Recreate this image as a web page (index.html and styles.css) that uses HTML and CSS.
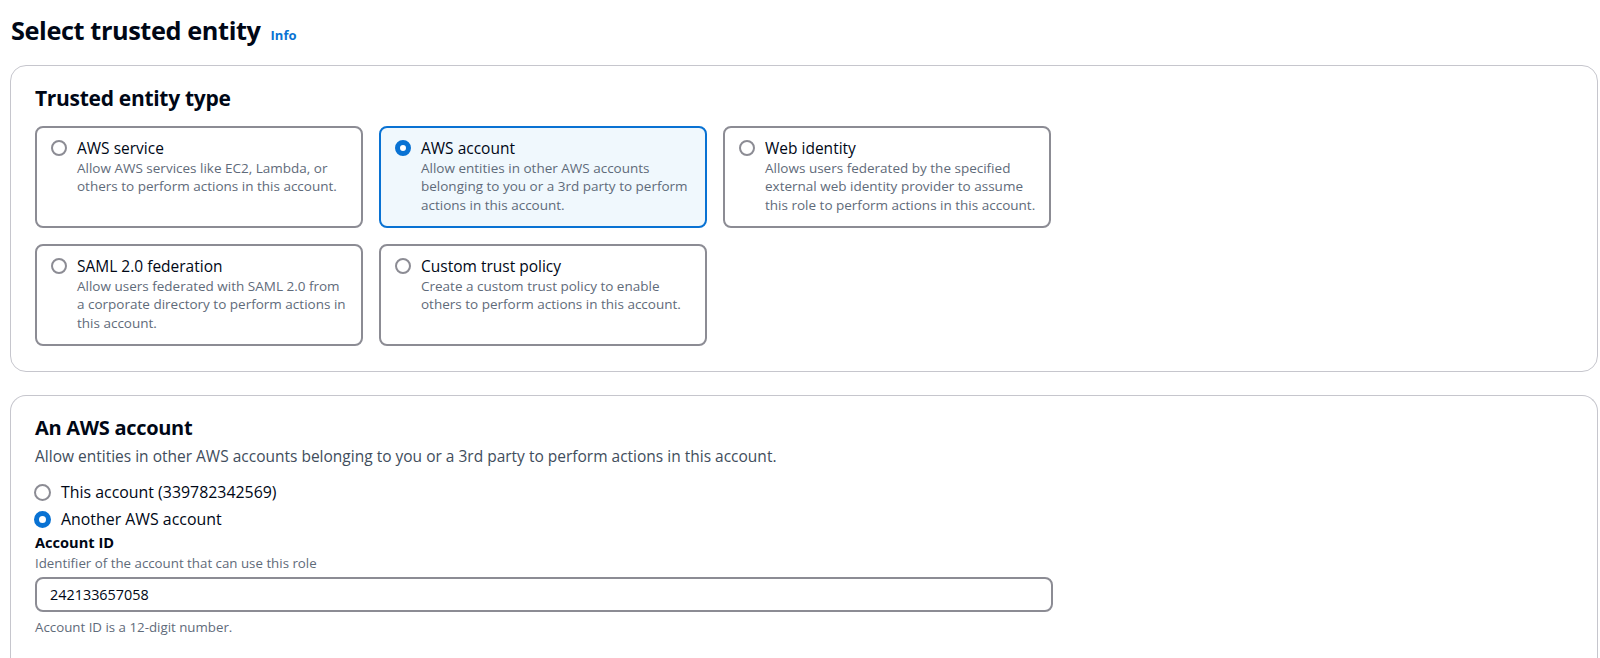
FILE: index.html
```html
<!DOCTYPE html>
<html lang="en">
<head>
<meta charset="utf-8">
<title>Select trusted entity</title>
<link rel="stylesheet" href="styles.css">
</head>
<body>
<div class="page">
  <div class="page-header">
    <h1 class="page-title">Select trusted entity</h1>
    <a class="info-link" href="#">Info</a>
  </div>

  <section class="container">
    <h2 class="container-title">Trusted entity type</h2>
    <div class="tiles">
      <label class="tile">
        <span class="radio"></span>
        <span class="tile-body">
          <span class="tile-title">AWS service</span>
          <span class="tile-desc">Allow AWS services like EC2, Lambda, or others to perform actions in this account.</span>
        </span>
      </label>
      <label class="tile tile-selected">
        <span class="radio radio-checked"></span>
        <span class="tile-body">
          <span class="tile-title">AWS account</span>
          <span class="tile-desc">Allow entities in other AWS accounts belonging to you or a 3rd party to perform actions in this account.</span>
        </span>
      </label>
      <label class="tile">
        <span class="radio"></span>
        <span class="tile-body">
          <span class="tile-title">Web identity</span>
          <span class="tile-desc">Allows users federated by the specified external web identity provider to assume this role to perform actions in this account.</span>
        </span>
      </label>
      <label class="tile">
        <span class="radio"></span>
        <span class="tile-body">
          <span class="tile-title">SAML 2.0 federation</span>
          <span class="tile-desc">Allow users federated with SAML 2.0 from a corporate directory to perform actions in this account.</span>
        </span>
      </label>
      <label class="tile">
        <span class="radio"></span>
        <span class="tile-body">
          <span class="tile-title">Custom trust policy</span>
          <span class="tile-desc">Create a custom trust policy to enable others to perform actions in this account.</span>
        </span>
      </label>
    </div>
  </section>

  <section class="container container-open">
    <h2 class="container-title container-title-sm">An AWS account</h2>
    <p class="container-desc">Allow entities in other AWS accounts belonging to you or a 3rd party to perform actions in this account.</p>
    <div class="radio-group">
      <label class="radio-row">
        <span class="radio"></span>
        <span class="radio-label">This account (339782342569)</span>
      </label>
      <label class="radio-row">
        <span class="radio radio-checked"></span>
        <span class="radio-label">Another AWS account</span>
      </label>
    </div>
    <div class="field">
      <div class="field-label">Account ID</div>
      <div class="field-desc">Identifier of the account that can use this role</div>
      <div class="input">242133657058</div>
      <div class="field-hint">Account ID is a 12-digit number.</div>
    </div>
  </section>
</div>
</body>
</html>
```

FILE: styles.css
```css
* { box-sizing: border-box; }

html, body {
  margin: 0;
  padding: 0;
  background: #ffffff;
  color: #000716;
  font-family: "Open Sans", "Noto Sans", "Liberation Sans", sans-serif;
  height: 658px;
  overflow: hidden;
}

.page {
  height: 658px;
  display: flex;
  flex-direction: column;
  padding: 14px 2px 0 10px;
}

.page-header {
  display: flex;
  align-items: baseline;
  gap: 10px;
  padding-left: 1px;
  margin-bottom: 19px;
}

.page-title {
  margin: 0;
  font-size: 25.3px;
  line-height: 32px;
  font-weight: 700;
  letter-spacing: -0.4px;
}

.info-link {
  font-size: 13px;
  font-weight: 700;
  color: #0972d3;
  text-decoration: none;
}

.container {
  border: 1px solid #c6c6cd;
  border-radius: 16px;
  padding: 20px 24px 25px 24px;
  margin-bottom: 23px;
  background: #ffffff;
}

.container-open {
  flex: 1;
  margin-bottom: 0;
  border-bottom: none;
  border-bottom-left-radius: 0;
  border-bottom-right-radius: 0;
  padding-bottom: 0;
}

.container-title {
  margin: 0;
  font-size: 21px;
  line-height: 24px;
  font-weight: 700;
  letter-spacing: -0.3px;
}

.container-title-sm {
  font-size: 20px;
}

.tiles {
  margin-top: 16px;
  display: grid;
  grid-template-columns: repeat(3, 328px);
  grid-auto-rows: 102px;
  gap: 16px;
}

.tile {
  display: flex;
  align-items: flex-start;
  gap: 10px;
  border: 2px solid #8c8c94;
  border-radius: 8px;
  padding: 9px 13px 9px 14px;
  background: #ffffff;
}

.tile-selected {
  border-color: #0972d3;
  background: #f0f8fd;
}

.radio {
  flex: none;
  width: 16px;
  height: 16px;
  border: 2px solid #8c8c94;
  border-radius: 50%;
  background: #ffffff;
  margin-top: 3px;
}

.radio-checked {
  border: 5px solid #0972d3;
}

.tile-body {
  display: flex;
  flex-direction: column;
}

.tile-title {
  font-size: 15.5px;
  line-height: 22px;
  color: #000716;
}

.tile-desc {
  font-size: 13.5px;
  line-height: 18.3px;
  color: #5f6b7a;
}

.container-desc {
  margin: 5px 0 0 0;
  font-size: 15.5px;
  line-height: 22px;
  color: #414d5c;
}

.radio-group {
  margin-top: 14px;
  display: flex;
  flex-direction: column;
  gap: 5px;
}

.radio-row {
  display: flex;
  align-items: center;
  gap: 10px;
  margin-left: -1px;
}

.radio-row .radio {
  margin-top: 0;
  width: 17px;
  height: 17px;
}

.radio-row .radio-checked {
  border-width: 5px;
}

.radio-label {
  font-size: 15.9px;
  line-height: 22px;
}

.field {
  margin-top: 2px;
}

.field-label {
  font-size: 14.6px;
  font-weight: 700;
  line-height: 20px;
}

.field-desc {
  margin-top: 2px;
  font-size: 13.3px;
  line-height: 18px;
  color: #5f6b7a;
}

.input {
  margin-top: 5px;
  width: 1018px;
  height: 35px;
  border: 2px solid #8c8c94;
  border-radius: 8px;
  padding: 0 13px;
  display: flex;
  align-items: center;
  font-size: 14.4px;
  color: #000716;
}

.field-hint {
  margin-top: 6px;
  font-size: 13.3px;
  line-height: 18px;
  color: #5f6b7a;
}
```
